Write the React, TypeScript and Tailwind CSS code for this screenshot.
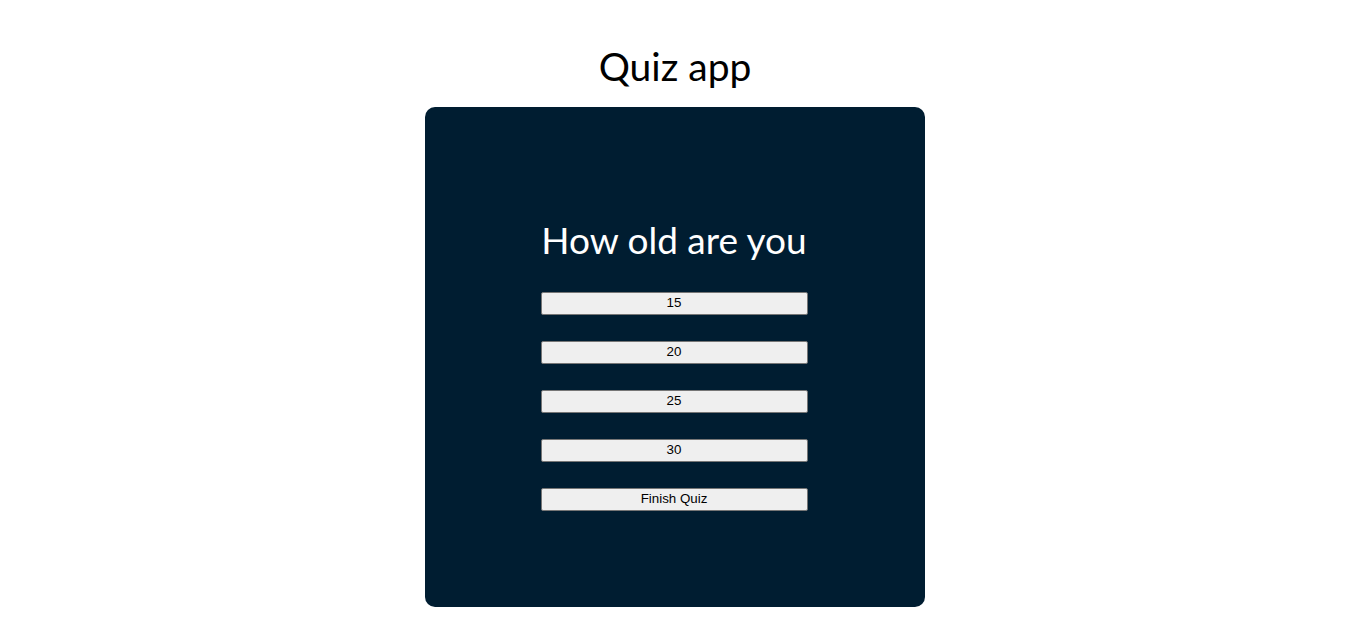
export default function App() {
  const answers = ['15', '20', '25', '30']

  return (
    <div className="min-h-screen bg-white flex flex-col items-center pl-[4px]">
      <h1 className="mt-[40px] mb-[15px] text-[39px] leading-[52px] text-black font-['Lato',sans-serif]">
        Quiz app
      </h1>

      {/* Quiz card */}
      <div className="w-[500px] h-[500px] rounded-[10px] bg-[#001d31] flex flex-col items-center justify-center">
        <div className="flex flex-col w-[267px] pt-[14px] mr-[2px]">
          <h2 className="text-center whitespace-nowrap text-white text-[37px] leading-[44px] mb-[30px] font-['Lato',sans-serif]">
            How old are you
          </h2>
          {answers.map((a) => (
            <button
              key={a}
              className="h-[23px] mb-[26px] w-full bg-[#efefef] border border-[#767676] rounded-[2px] text-[13.33px] text-black font-['Liberation_Sans',Arial,sans-serif]"
            >
              {a}
            </button>
          ))}
          <button className="h-[23px] w-full bg-[#efefef] border border-[#767676] rounded-[2px] text-[13.33px] text-black font-['Liberation_Sans',Arial,sans-serif]">
            Finish Quiz
          </button>
        </div>
      </div>
    </div>
  )
}
